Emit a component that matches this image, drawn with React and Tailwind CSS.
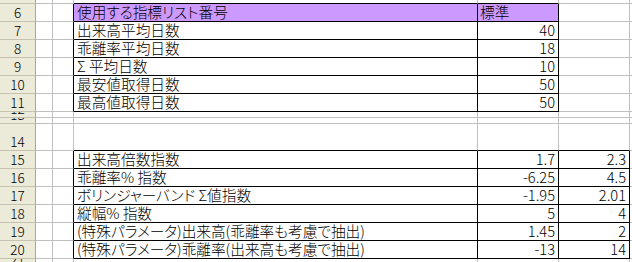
// App.jsx - spreadsheet excerpt (rows 5-21)
const GRAY = 'border-r-[#c0c0c0]';
const BLACK = 'border-r-black';
const GRAY_B = 'border-b-[#c0c0c0]';
const BLACK_B = 'border-b-black';

const rows = [
  { n: '5', h: 'h-[4px]', c: '', d: '', e: '', top: 'first' },
  { n: '6', h: 'h-[18px]', c: '使用する指標リスト番号', d: '標準', e: '', t: 1, head: true },
  { n: '7', h: 'h-[18px]', c: '出来高平均日数', d: '40', e: '', t: 1 },
  { n: '8', h: 'h-[18px]', c: '乖離率平均日数', d: '18', e: '', t: 1 },
  { n: '9', h: 'h-[18px]', c: 'Σ 平均日数', d: '10', e: '', t: 1 },
  { n: '10', h: 'h-[18px]', c: '最安値取得日数', d: '50', e: '', t: 1 },
  { n: '11', h: 'h-[18px]', c: '最高値取得日数', d: '50', e: '', t: 1 },
  { n: '12', h: 'h-[6px]', c: '', d: '', e: '' },
  { n: '13', h: 'h-[6px]', c: '', d: '', e: '' },
  { n: '14', h: 'h-[27px]', c: '', d: '', e: '', top: 'second' },
  { n: '15', h: 'h-[18px]', c: '出来高倍数指数', d: '1.7', e: '2.3', t: 2 },
  { n: '16', h: 'h-[18px]', c: '乖離率% 指数', d: '-6.25', e: '4.5', t: 2 },
  { n: '17', h: 'h-[18px]', c: 'ボリンジャーバンド Σ値指数', d: '-1.95', e: '2.01', t: 2 },
  { n: '18', h: 'h-[18px]', c: '縦幅% 指数', d: '5', e: '4', t: 2 },
  { n: '19', h: 'h-[18px]', c: '(特殊パラメータ)出来高(乖離率も考慮で抽出)', d: '1.45', e: '2', t: 2 },
  { n: '20', h: 'h-[18px]', c: '(特殊パラメータ)乖離率(出来高も考慮で抽出)', d: '-13', e: '14', t: 2 },
  { n: '21', h: 'h-[10px]', c: '', d: '', e: '' },
];

const Cell = ({ w, r, b, bg = '', right, children }) => (
  <div
    className={`${w} ${r} ${b} ${bg} shrink-0 box-border border-r border-b flex items-end overflow-hidden whitespace-nowrap pb-px ${
      right ? 'justify-end pr-[3px]' : 'pl-[3px]'
    }`}
  >
    {children}
  </div>
);

const Row = ({ row }) => {
  const inA = row.t === 1;
  const inB = row.t === 2;
  // bottom borders: black inside a table, or on the row just above it
  const cb = inA || inB || row.top ? BLACK_B : GRAY_B;
  const eb = inB || row.top === 'second' ? BLACK_B : GRAY_B;
  const headBg = row.head ? 'bg-[#cc99ff]' : '';

  return (
    <div className={`flex ${row.h} overflow-hidden`}>
      <div className="w-[36px] shrink-0 box-border border-r border-b border-r-[#aca899] border-b-[#c5c2b2] bg-[#ecead9] flex items-end justify-center overflow-hidden text-[13.5px] leading-[15px] pb-[1px]">
        {row.n}
      </div>
      <Cell w="w-[17px]" r={GRAY} b={GRAY_B} />
      <Cell w="w-[21px]" r={inA || inB ? BLACK : GRAY} b={GRAY_B} />
      <Cell w="w-[404px]" r={inA || inB ? BLACK : GRAY} b={cb} bg={headBg}>
        {row.c}
      </Cell>
      <Cell w="w-[81px]" r={inA || inB ? BLACK : GRAY} b={cb} bg={headBg} right={!row.head}>
        {row.head ? <span className="-ml-px">{row.d}</span> : row.d}
      </Cell>
      <Cell w="w-[71px]" r={inB ? BLACK : GRAY} b={eb} right>
        {row.e}
      </Cell>
      <Cell w="flex-1" r={GRAY} b={GRAY_B} />
    </div>
  );
};

export default function App() {
  return (
    <div className="w-[632px] h-[262px] overflow-hidden bg-white text-black text-[14.67px] leading-[16px] font-light font-['Noto_Sans_CJK_JP','Noto_Sans_CJK_SC',sans-serif] [font-feature-settings:'palt']">
      {rows.map((row) => (
        <Row key={row.n} row={row} />
      ))}
    </div>
  );
}
